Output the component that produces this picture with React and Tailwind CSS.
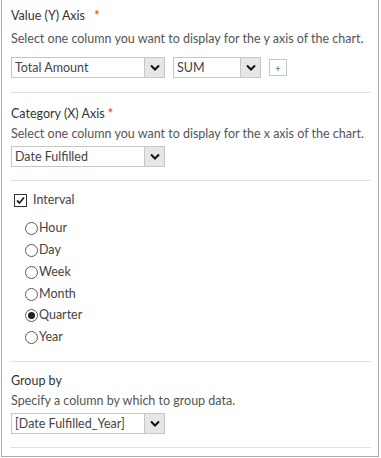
import { useState } from "react";

function Select({ value, width }) {
  return (
    <div
      className="flex h-[21px] border border-[#c6c6c6] bg-white"
      style={{ width }}
    >
      <div className="flex-1 truncate pl-[3px] leading-[19px] text-[#444]">{value}</div>
      <div className="flex w-[20px] items-center justify-center border-l border-[#c6c6c6] bg-[#e6e6e6]">
        <svg width="10" height="7" viewBox="0 0 10 7">
          <path d="M1 1.5 L5 5.5 L9 1.5" fill="none" stroke="#111" strokeWidth="2" />
        </svg>
      </div>
    </div>
  );
}

function Radio({ label, checked, onClick }) {
  return (
    <div className="flex h-[21.8px] cursor-pointer items-center" onClick={onClick}>
      <span className="flex h-[13px] w-[13px] items-center justify-center rounded-full border border-[#5a5a5a] bg-white">
        {checked && <span className="h-[7px] w-[7px] rounded-full bg-[#222]" />}
      </span>
      <span className="ml-px text-[#444]">{label}</span>
    </div>
  );
}

export default function App() {
  const [interval, setInterval] = useState("Quarter");
  const options = ["Hour", "Day", "Week", "Month", "Quarter", "Year"];

  return (
    <div className="h-[458px] w-[381px] bg-white font-['Segoe_UI','Lato',sans-serif] text-[12.5px]">
      <div className="ml-px h-[457px] w-[378px] whitespace-nowrap border-x border-b border-[#ababab] pl-[9px] pr-[7px]">
        {/* Value axis */}
        <div className="border-b border-[#e0e0e0] pb-[14px] pt-[6px]">
          <div className="leading-[20px] text-[#333]">
            Value (Y) Axis <span className="ml-[6px] font-bold text-[#e8571f]">*</span>
          </div>
          <div className="mt-[3px] leading-[20px] text-[#555]">
            Select one column you want to display for the y axis of the chart.
          </div>
          <div className="mt-[8px] flex items-center">
            <Select value="Total Amount" width={154} />
            <div className="ml-[8px]">
              <Select value="SUM" width={88} />
            </div>
            <div className="ml-[8px] flex h-[17px] w-[18px] items-center justify-center border border-[#c6c6c6] text-[10px] leading-none text-[#555]">
              +
            </div>
          </div>
        </div>

        {/* Category axis */}
        <div className="border-b border-[#e0e0e0] pb-[13px] pt-[11px]">
          <div className="leading-[20px] text-[#333]">
            Category (X) Axis <span className="font-bold text-[#e8571f]">*</span>
          </div>
          <div className="leading-[20px] text-[#555]">
            Select one column you want to display for the x axis of the chart.
          </div>
          <div className="mt-[2px]">
            <Select value="Date Fulfilled" width={154} />
          </div>
        </div>

        {/* Interval */}
        <div className="border-b border-[#e0e0e0] pb-[12px] pt-[10px]">
          <div className="flex items-center pl-[3px]">
            <span className="flex h-[13px] w-[13px] items-center justify-center border border-[#333] bg-white">
              <svg width="11" height="11" viewBox="0 0 11 11">
                <path d="M2 5.5 L4.5 8 L9 2.5" fill="none" stroke="#222" strokeWidth="1.8" />
              </svg>
            </span>
            <span className="ml-[6px] text-[#444]">Interval</span>
          </div>
          <div className="mt-[8px] pl-[14px]">
            {options.map((o) => (
              <Radio key={o} label={o} checked={interval === o} onClick={() => setInterval(o)} />
            ))}
          </div>
        </div>

        {/* Group by */}
        <div className="border-b border-[#e0e0e0] pb-[13px] pt-[9px]">
          <div className="leading-[20px] text-[#333]">Group by</div>
          <div className="leading-[20px] text-[#555]">Specify a column by which to group data.</div>
          <div className="mt-[2px]">
            <Select value="[Date Fulfilled_Year]" width={154} />
          </div>
        </div>
      </div>
    </div>
  );
}
